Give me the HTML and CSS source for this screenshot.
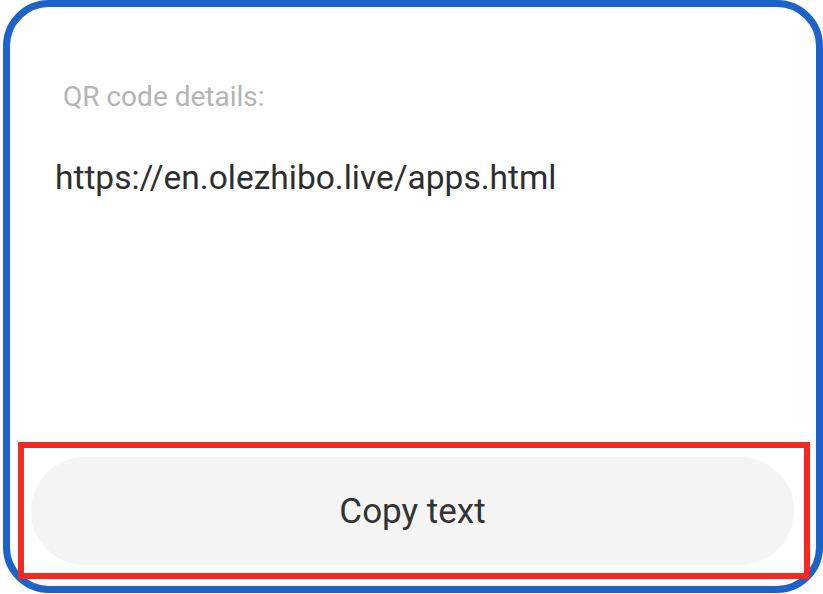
FILE: index.html
```html
<!DOCTYPE html>
<html>
<head>
<meta charset="utf-8">
<link rel="stylesheet" href="styles.css">
</head>
<body>
<div class="frame">
  <div class="content">
    <div class="label">QR code details:</div>
    <div class="url">https://en.olezhibo.live/apps.html</div>
  </div>
  <div class="highlight">
    <button class="copy">Copy text</button>
  </div>
</div>
</body>
</html>
```

FILE: styles.css
```css
html, body {
  margin: 0;
  padding: 0;
  background: #ffffff;
}
body {
  width: 823px;
  height: 594px;
  font-family: Roboto, "Noto Sans", sans-serif;
}
.frame {
  box-sizing: border-box;
  margin-left: 3px;
  width: 820px;
  height: 593px;
  border: 7px solid #1b63c9;
  border-radius: 46px;
  display: flex;
  flex-direction: column;
}
.content {
  flex: 1;
  padding-left: 45px;
}
.label {
  margin-top: 75px;
  margin-left: 8px;
  font-size: 28px;
  line-height: 30px;
  color: #b4b4b4;
}
.url {
  margin-top: 46px;
  font-size: 33.5px;
  line-height: 40px;
  color: #2e2e2e;
}
.highlight {
  margin: 0 6px 7px 8px;
  border: 6px solid #f6291e;
  padding: 9px 10px 8px 7px;
  display: flex;
}
.copy {
  flex: 1;
  height: 108px;
  border: none;
  border-radius: 54px;
  background: #f4f4f4;
  font-family: Roboto, "Noto Sans", sans-serif;
  font-size: 35px;
  color: #333333;
  padding: 0;
}
```
